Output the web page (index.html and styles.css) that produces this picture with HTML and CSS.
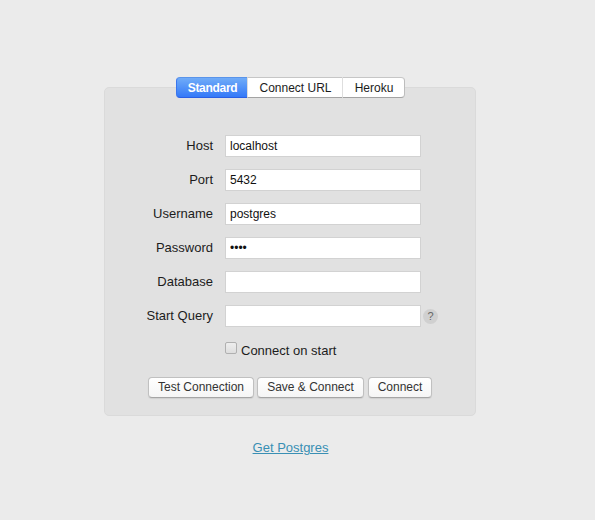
FILE: index.html
```html
<!DOCTYPE html>
<html lang="en">
<head>
<meta charset="utf-8">
<title>Connect</title>
<link rel="stylesheet" href="styles.css">
</head>
<body>
<main class="login">
  <form class="panel">
    <nav class="tabs">
      <a class="tab active">Standard</a>
      <a class="tab url">Connect URL</a>
      <a class="tab heroku">Heroku</a>
    </nav>
    <div class="fields">
      <label class="label" for="host">Host</label><input class="input" id="host" type="text" value="localhost">
      <label class="label" for="port">Port</label><input class="input" id="port" type="text" value="5432">
      <label class="label" for="user">Username</label><input class="input" id="user" type="text" value="postgres">
      <label class="label" for="password">Password</label><input class="input" id="password" type="password" value="pass">
      <label class="label" for="database">Database</label><input class="input" id="database" type="text">
      <label class="label" for="query">Start Query</label>
      <div class="with-help"><input class="input" id="query" type="text"><span class="help">?</span></div>
    </div>
    <label class="check"><input class="checkbox" type="checkbox"><span>Connect on start</span></label>
    <div class="buttons">
      <button class="button test" type="button">Test Connection</button>
      <button class="button save" type="button">Save &amp; Connect</button>
      <button class="button connect" type="button">Connect</button>
    </div>
  </form>
  <a class="get" href="#">Get Postgres</a>
</main>
</body>
</html>
```
FILE: styles.css
```css
* { box-sizing: border-box; }

body {
  margin: 0;
  height: 520px;
  overflow: hidden;
  background: #ebebeb;
  color: #1c1c1c;
  font: 13px/16px "Liberation Sans", Arial, sans-serif;
}

.login {
  display: flex;
  flex-direction: column;
  width: 372px;
  margin-left: 104px;
  padding-top: 87px;
}

.panel {
  height: 329px;
  background: #e1e1e1;
  border: 1px solid #dadada;
  border-radius: 5px;
}

.tabs {
  display: flex;
  width: 229px;
  height: 21px;
  margin: -11px 0 0 71px;
}

.tab {
  height: 21px;
  padding: 2px 0 0 1px;
  background: #fff;
  border: 1px solid #c6c6c6;
  border-bottom-color: #a3a3a3;
  border-left-color: #dedede;
  border-right: 0;
  font-size: 12px;
  line-height: 17px;
  text-align: center;
}

.tab.active {
  width: 71px;
  color: #fff;
  font-weight: bold;
  letter-spacing: -0.3px;
  background: linear-gradient(#70acf8, #3479f8);
  border-color: #5a94ea #3a76ee #2a5fe4 #3a76ee;
  border-radius: 4px 0 0 4px;
}

.tab.url { width: 95px; }

.tab.heroku {
  width: 63px;
  border-right: 1px solid #bdbdbd;
  border-radius: 0 4px 4px 0;
}

.fields {
  display: grid;
  grid-template-columns: 108px 196px;
  column-gap: 12px;
  row-gap: 12px;
  margin-top: 37px;
}

.label {
  text-align: right;
  line-height: 22px;
  height: 22px;
}

.input {
  display: block;
  flex: none;
  width: 196px;
  height: 22px;
  margin: 0;
  padding: 0 4px 1px;
  border: 1px solid #d2d2d2;
  border-radius: 0;
  outline: 0;
  background: #fff;
  color: #111;
  font: 12px "Liberation Sans", Arial, sans-serif;
}

.with-help { display: flex; align-items: center; gap: 2px; }

.help {
  flex: none;
  width: 15px;
  height: 15px;
  border-radius: 50%;
  background: #d0d0d0;
  color: #666;
  font-size: 11px;
  line-height: 15px;
  text-align: center;
}

.check {
  display: flex;
  gap: 4px;
  height: 16px;
  margin: 16px 0 0 120px;
}

.checkbox {
  appearance: none;
  width: 12px;
  height: 12px;
  margin: -1px 0 0;
  border: 1px solid #b0b0b0;
  border-radius: 2px;
  background: linear-gradient(#eee, #dedede);
}

.buttons {
  display: flex;
  gap: 4px;
  margin: 18px 0 0 43px;
}

.button {
  height: 21px;
  padding: 0 0 1px;
  border: 1px solid #c0c0c0;
  border-bottom-color: #a5a5a5;
  border-radius: 4px;
  background: linear-gradient(#fff, #f5f5f5);
  box-shadow: 0 1px 1px rgba(0, 0, 0, .08);
  color: #333;
  font: 12px/16px "Liberation Sans", Arial, sans-serif;
}

.test { width: 106px; }
.save { width: 107px; margin-left: -1px; }
.connect { width: 64px; }

.get {
  align-self: center;
  margin: 24px 0 0 1px;
  color: #398fb4;
}
```
